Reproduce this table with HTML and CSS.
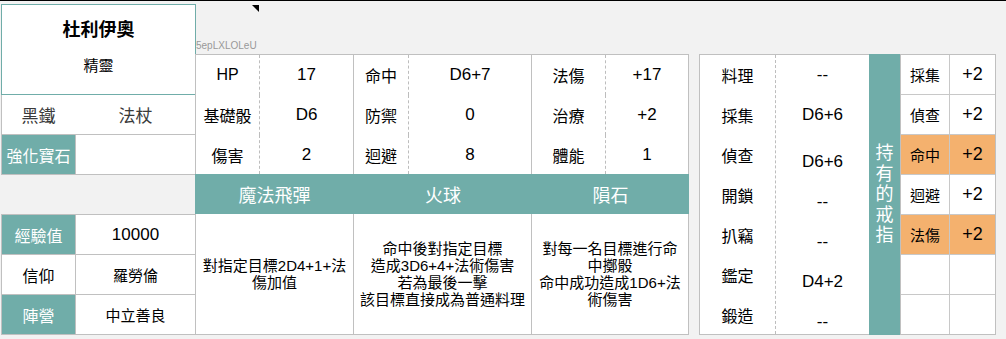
FILE: index.html
```html
<!DOCTYPE html>
<html lang="zh-Hant">
<head>
<meta charset="utf-8">
<title>角色卡</title>
<link rel="stylesheet" href="styles.css">
</head>
<body>
<div class="page">
  <div class="left">
    <div class="profile">
      <div class="name">杜利伊奧</div>
      <div class="race">精靈</div>
    </div>
    <div class="equip">
      <div class="cell c1">黑鐵</div>
      <div class="cell c2">法杖</div>
    </div>
    <div class="gem">
      <div class="cell c1 teal">強化寶石</div>
      <div class="cell c2"></div>
    </div>
    <div class="info">
      <div class="irow"><div class="cell c1 teal">經驗值</div><div class="cell c2 num">10000</div></div>
      <div class="irow"><div class="cell c1">信仰</div><div class="cell c2 sm">羅勞倫</div></div>
      <div class="irow"><div class="cell c1 teal">陣營</div><div class="cell c2 sm">中立善良</div></div>
    </div>
  </div>

  <div class="mid">
    <div class="mid-top">
      <svg class="corner" viewBox="0 0 7 7" width="7" height="7"><polygon points="0,0 7,0 7,7" fill="#000"/></svg>
      <div class="code">5epLXLOLeU</div>
    </div>
    <div class="stats">
      <div class="group g1">
        <div class="cell lab">HP</div><div class="cell val">17</div>
        <div class="cell lab">基礎骰</div><div class="cell val">D6</div>
        <div class="cell lab">傷害</div><div class="cell val">2</div>
      </div>
      <div class="group g2">
        <div class="cell lab">命中</div><div class="cell val">D6+7</div>
        <div class="cell lab">防禦</div><div class="cell val">0</div>
        <div class="cell lab">迴避</div><div class="cell val">8</div>
      </div>
      <div class="group g3">
        <div class="cell lab">法傷</div><div class="cell val">+17</div>
        <div class="cell lab">治療</div><div class="cell val">+2</div>
        <div class="cell lab">體能</div><div class="cell val">1</div>
      </div>
    </div>
    <div class="spell-head">
      <div class="cell h1">魔法飛彈</div>
      <div class="cell h2">火球</div>
      <div class="cell h3">隕石</div>
    </div>
    <div class="spell-desc">
      <div class="cell d1">對指定目標2D4+1+法<br>傷加值</div>
      <div class="cell d2">命中後對指定目標<br>造成3D6+4+法術傷害<br>若為最後一擊<br>該目標直接成為普通料理</div>
      <div class="cell d3">對每一名目標進行命<br>中擲骰<br>命中成功造成1D6+法<br>術傷害</div>
    </div>
  </div>

  <div class="right">
    <div class="sk-labels">
      <div class="cell">料理</div>
      <div class="cell">採集</div>
      <div class="cell">偵查</div>
      <div class="cell">開鎖</div>
      <div class="cell">扒竊</div>
      <div class="cell">鑑定</div>
      <div class="cell">鍛造</div>
    </div>
    <div class="sk-values">
      <div class="cell">--</div>
      <div class="cell">D6+6</div>
      <div class="cell shift">D6+6</div>
      <div class="cell">--</div>
      <div class="cell">--</div>
      <div class="cell">D4+2</div>
      <div class="cell">--</div>
    </div>
    <div class="ring-title"><span>持有的戒指</span></div>
    <div class="rings">
      <div class="cell rl">採集</div><div class="cell rv">+2</div>
      <div class="cell rl">偵查</div><div class="cell rv">+2</div>
      <div class="cell rl hi">命中</div><div class="cell rv hi">+2</div>
      <div class="cell rl">迴避</div><div class="cell rv">+2</div>
      <div class="cell rl hi">法傷</div><div class="cell rv hi">+2</div>
      <div class="cell rl"></div><div class="cell rv"></div>
      <div class="cell rl"></div><div class="cell rv"></div>
    </div>
  </div>
</div>
</body>
</html>
```

FILE: styles.css
```css
* {
  box-sizing: border-box;
}

html, body {
  margin: 0;
  padding: 0;
}

body {
  background: #f2f2f2;
  border-top: 1px solid #000;
  font-family: "Liberation Sans", "Noto Sans CJK TC", sans-serif;
  color: #000;
  font-size: 16px;
}

.page {
  display: flex;
  align-items: flex-start;
  padding-left: 1px;
}

.cell {
  display: flex;
  align-items: center;
  justify-content: center;
  text-align: center;
}

.teal {
  background: #70ada9 !important;
  color: #fff;
}

/* ---------- left column ---------- */
.left {
  width: 195px;
  margin-top: 3px;
  display: flex;
  flex-direction: column;
}

.profile {
  height: 91px;
  border: 1px solid #70ada9;
  background: #fff;
  display: flex;
  flex-direction: column;
  align-items: center;
}

.name {
  margin-top: 13px;
  line-height: 24px;
  font-size: 18px;
  font-weight: bold;
}

.race {
  margin-top: 13px;
  line-height: 22px;
  font-size: 15px;
}

.equip,
.gem {
  display: flex;
  gap: 1px;
  height: 40px;
  border: 1px solid #c0c0c0;
  border-top: 0;
}

.equip {
  background: #fff;
  color: #3a3a3a;
  font-size: 17px;
}

.gem {
  background: #c0c0c0;
}

.c1 {
  width: 73px;
  background: #fff;
}

.c2 {
  flex: 1;
  background: #fff;
}

.info {
  margin-top: 39px;
  border: 1px solid #c0c0c0;
  background: #c0c0c0;
  display: flex;
  flex-direction: column;
  gap: 1px;
}

.irow {
  display: flex;
  gap: 1px;
  height: 39px;
}

.num {
  font-size: 17px;
}

.sm {
  font-size: 15px;
}

/* ---------- middle column ---------- */
.mid {
  width: 494px;
  margin-left: -1px;
  display: flex;
  flex-direction: column;
}

.mid-top {
  height: 53px;
  display: flex;
  flex-direction: column;
}

.corner {
  display: block;
  margin: 4px 0 0 57px;
}

.code {
  margin-top: auto;
  margin-bottom: 2px;
  padding-left: 1px;
  font-size: 10px;
  line-height: 12px;
  color: #999;
}

.stats {
  display: flex;
  height: 120px;
  border: 1px solid #c0c0c0;
  border-bottom: 0;
  background: #fff;
}

.group {
  display: grid;
  grid-template-rows: 40px 40px 39px;
  border-right: 1px solid #c0c0c0;
}

.group:last-child {
  border-right: 0;
}

.g1 {
  width: 158px;
  grid-template-columns: 64px 1fr;
}

.g2 {
  width: 178px;
  grid-template-columns: 55px 1fr;
}

.g3 {
  width: 156px;
  grid-template-columns: 74px 1fr;
}

.lab {
  border-right: 1px dashed #bdbdbd;
}

.val {
  font-size: 17px;
}

.spell-head {
  display: flex;
  height: 40px;
  background: #70ada9;
  color: #fff;
  font-size: 18px;
}

.h1 { width: 159px; }
.h2 { width: 178px; }
.h3 { width: 157px; }

.spell-desc {
  display: flex;
  height: 121px;
  border: 1px solid #c0c0c0;
  border-top: 0;
  background: #fff;
  font-size: 15px;
  line-height: 17px;
  white-space: nowrap;
}

.d1 {
  width: 158px;
  border-right: 1px solid #c0c0c0;
}

.d2 {
  width: 178px;
  border-right: 1px solid #c0c0c0;
}

.d3 {
  width: 156px;
}

/* ---------- right panel ---------- */
.right {
  width: 297px;
  height: 281px;
  margin-left: 10px;
  margin-top: 53px;
  border: 1px solid #c0c0c0;
  background: #fff;
  display: flex;
}

.sk-labels {
  width: 76px;
  border-right: 1px dashed #bdbdbd;
  display: flex;
  flex-direction: column;
  overflow: hidden;
}

.sk-labels .cell {
  flex: none;
  height: 40px;
}

.sk-values {
  width: 93px;
  display: flex;
  flex-direction: column;
  overflow: hidden;
  font-size: 17px;
}

.sk-values .cell {
  flex: none;
  height: 40px;
}

.sk-values .shift {
  margin-top: 7px;
}

.ring-title {
  width: 31px;
  margin: -1px 0;
  background: #70ada9;
  color: #fff;
  font-size: 18px;
  display: flex;
  align-items: center;
  justify-content: center;
}

.ring-title span {
  width: 18px;
  line-height: 20.5px;
  text-align: center;
}

.rings {
  width: 95px;
  border-left: 1px solid #c0c0c0;
  background: #c8c8c8;
  display: grid;
  grid-template-columns: 48px 45px;
  grid-template-rows: repeat(7, 39px);
  gap: 1px;
}

.rl {
  background: #fff;
  font-size: 15px;
}

.rv {
  background: #fff;
  font-size: 18px;
}

.rings .hi {
  background: #f4b16e;
}
```
